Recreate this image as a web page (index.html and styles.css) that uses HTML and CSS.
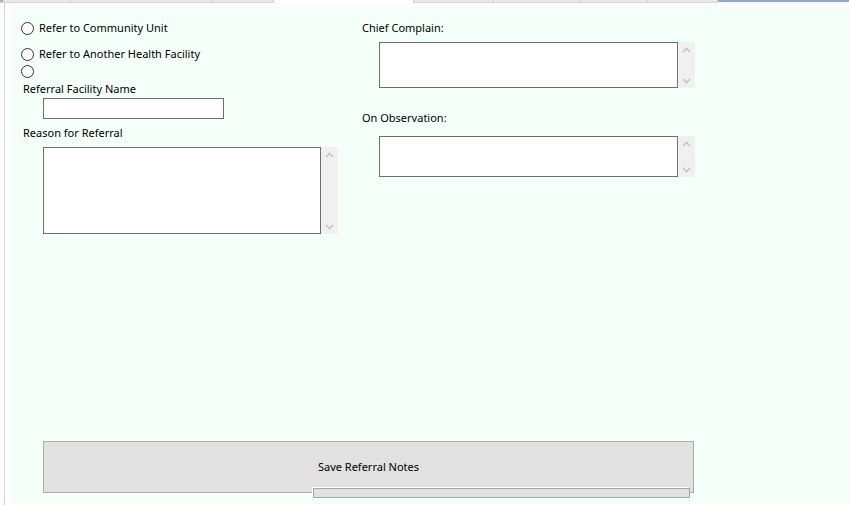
FILE: index.html
```html
<!DOCTYPE html>
<html>
<head>
<meta charset="utf-8">
<link rel="stylesheet" href="styles.css">
</head>
<body>
<div class="tabs">
  <div class="tab t1"></div>
  <div class="tab t2"></div>
  <div class="tab t3"></div>
  <div class="tab t4"></div>
  <div class="tab sel"></div>
  <div class="tab t5"></div>
  <div class="tab t6"></div>
  <div class="tab t7"></div>
  <div class="tab t8"></div>
  <div class="blue"></div>
</div>
<div class="frame">
  <div class="panel">
    <div class="top">
      <div class="leftcol">
        <div class="row r1"><span class="radio"></span><span class="txt">Refer to Community Unit</span></div>
        <div class="row r2"><span class="radio"></span><span class="txt">Refer to Another Health Facility</span></div>
        <div class="row r3"><span class="radio"></span></div>
        <div class="lbl l1">Referral Facility Name</div>
        <div class="input"></div>
        <div class="lbl l2">Reason for Referral</div>
        <div class="memo m1">
          <div class="box"></div>
          <div class="sb">
            <svg width="9" height="6" viewBox="0 0 9 6"><polyline points="1,5 4.5,1.5 8,5" fill="none" stroke="#c4c4c4" stroke-width="1.6"/></svg>
            <svg width="9" height="6" viewBox="0 0 9 6"><polyline points="1,1 4.5,4.5 8,1" fill="none" stroke="#c4c4c4" stroke-width="1.6"/></svg>
          </div>
        </div>
      </div>
      <div class="rightcol">
        <div class="lbl r-l1">Chief Complain:</div>
        <div class="memo m2">
          <div class="box"></div>
          <div class="sb">
            <svg width="9" height="6" viewBox="0 0 9 6"><polyline points="1,5 4.5,1.5 8,5" fill="none" stroke="#c4c4c4" stroke-width="1.6"/></svg>
            <svg width="9" height="6" viewBox="0 0 9 6"><polyline points="1,1 4.5,4.5 8,1" fill="none" stroke="#c4c4c4" stroke-width="1.6"/></svg>
          </div>
        </div>
        <div class="lbl r-l2">On Observation:</div>
        <div class="memo m3">
          <div class="box"></div>
          <div class="sb">
            <svg width="9" height="6" viewBox="0 0 9 6"><polyline points="1,5 4.5,1.5 8,5" fill="none" stroke="#c4c4c4" stroke-width="1.6"/></svg>
            <svg width="9" height="6" viewBox="0 0 9 6"><polyline points="1,1 4.5,4.5 8,1" fill="none" stroke="#c4c4c4" stroke-width="1.6"/></svg>
          </div>
        </div>
      </div>
    </div>
    <div class="btnwrap">
      <div class="btn">Save Referral Notes</div>
      <div class="bar"></div>
    </div>
  </div>
</div>
</body>
</html>
```
FILE: styles.css
```css
html, body {
  margin: 0;
  padding: 0;
  background: #ffffff;
  font-family: "Noto Sans", "Open Sans", sans-serif;
  font-size: 11px;
  color: #000;
}
.tabs {
  display: flex;
  height: 3px;
  width: 849px;
}
.tab {
  flex: none;
  height: 2px;
  background: #e9e9e9;
  border-bottom: 1px solid #d6d6d6;
  border-right: 1px solid #cfcfcf;
  box-sizing: content-box;
}
.t1 { width: 3px; background: #9bb5d5; }
.t2 { width: 66px; }
.t3 { width: 140px; }
.t4 { width: 61px; }
.sel { width: 139px; background: #fff; border-bottom-color: #fff; }
.t5 { width: 79px; }
.t6 { width: 85px; }
.t7 { width: 67px; }
.t8 { width: 69px; }
.blue {
  flex: none;
  width: 131px;
  height: 0;
  border-top: 2px solid #8eaad0;
}
.frame {
  margin-left: 4px;
  border-left: 1px solid #d4d4d4;
  padding: 4px 0 1px 6px;
}
.panel {
  background: #f5fffa;
  height: 497px;
  display: flex;
  flex-direction: column;
}
.top {
  display: flex;
}
.leftcol {
  width: 341px;
  padding-left: 10px;
  display: flex;
  flex-direction: column;
  align-items: flex-start;
}
.rightcol {
  display: flex;
  flex-direction: column;
  align-items: flex-start;
}
.row {
  height: 14px;
  display: flex;
  align-items: center;
}
.r1 { margin-top: 14px; }
.r2 { margin-top: 12px; }
.r3 { margin-top: 3px; }
.radio {
  width: 11px;
  height: 11px;
  border: 1px solid #333;
  border-radius: 50%;
  background: #fff;
  box-sizing: content-box;
}
.txt {
  margin-left: 5px;
  white-space: nowrap;
  line-height: 14px;
  padding-bottom: 1px;
}
.lbl {
  height: 14px;
  line-height: 13px;
  white-space: nowrap;
}
.l1 { margin-top: 4px; padding-left: 2px; }
.input {
  margin-top: 2px;
  margin-left: 22px;
  width: 179px;
  height: 19px;
  border: 1px solid #6e6e6e;
  background: #fff;
}
.l2 { margin-top: 7px; padding-left: 2px; }
.memo {
  display: flex;
}
.box {
  border: 1px solid #6e6e6e;
  background: #fff;
  box-sizing: border-box;
}
.sb {
  width: 17px;
  background: #f0f0f0;
  display: flex;
  flex-direction: column;
  justify-content: space-between;
  align-items: center;
  padding: 5px 0 4px;
  box-sizing: border-box;
}
.m1 { margin-top: 7px; margin-left: 22px; height: 87px; }
.m1 .box { width: 278px; }
.r-l1 { margin-top: 14px; }
.m2 { margin-top: 7px; margin-left: 17px; height: 46px; }
.m2 .box, .m3 .box { width: 299px; }
.r-l2 { margin-top: 23px; }
.m3 { margin-top: 11px; margin-left: 17px; height: 41px; }
.btnwrap {
  margin-top: auto;
  margin-bottom: 11px;
  margin-left: 32px;
  position: relative;
  width: 651px;
}
.btn {
  height: 52px;
  box-sizing: border-box;
  border: 1px solid #adadad;
  background: #e1e1e1;
  display: flex;
  align-items: center;
  justify-content: center;
  white-space: nowrap;
  padding-bottom: 2px;
}
.bar {
  position: absolute;
  left: 270px;
  top: 47px;
  width: 377px;
  height: 10px;
  box-sizing: border-box;
  background: #e1e1e1;
  border: 1px solid #a6a6a6;
  box-shadow: -1px -1px 0 #ffffff;
}
```
